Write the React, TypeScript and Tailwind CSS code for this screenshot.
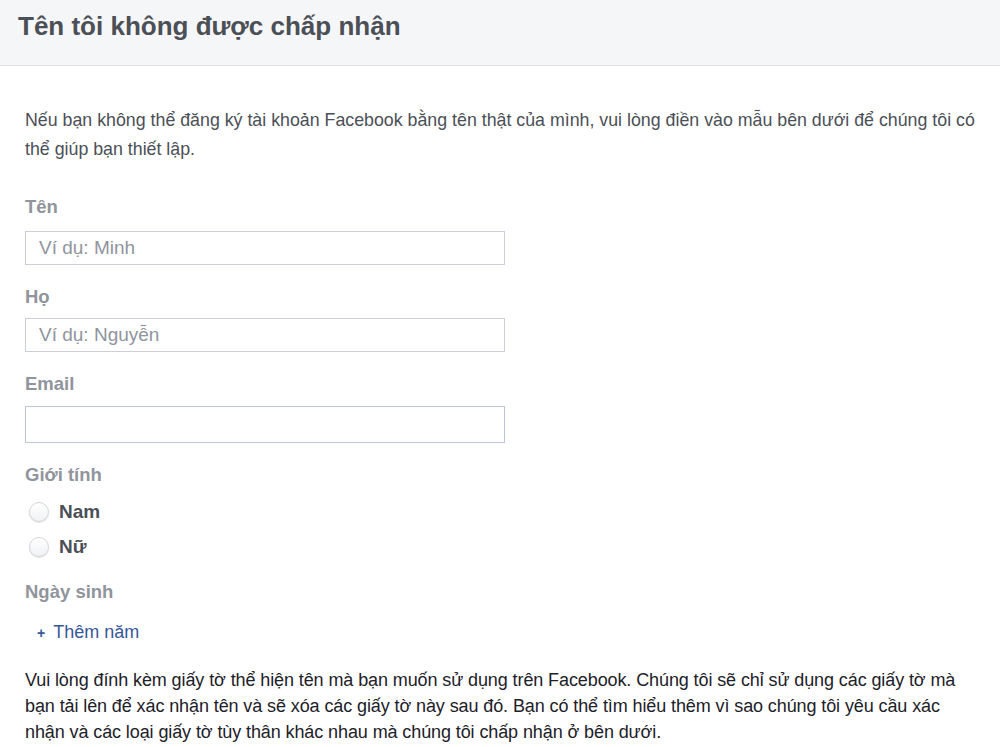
import React from "react";

function Label({ children }: { children: React.ReactNode }) {
  return <div className="text-[18.5px] font-bold text-[#90949c] leading-[22px]">{children}</div>;
}

function Radio({ label }: { label: string }) {
  return (
    <label className="flex items-center gap-[10px] h-[24px]">
      <span className="w-[20px] h-[20px] rounded-full border border-[#d3d6db] bg-gradient-to-b from-white to-[#f1f2f4] shadow-[0_1px_1px_rgba(0,0,0,0.12)]" />
      <span className="text-[19px] font-bold text-[#4b4f56]">{label}</span>
    </label>
  );
}

export default function App() {
  return (
    <div className="w-[1000px] h-[747px] overflow-hidden bg-white" style={{ fontFamily: '"Liberation Sans", Arial, sans-serif' }}>
      <div className="h-[66px] bg-[#f5f6f7] border-b border-[#dddfe2] flex items-center px-[18px]">
        <h1 className="text-[26px] font-bold text-[#4b4f56] -mt-[12px]">Tên tôi không được chấp nhận</h1>
      </div>
      <div className="px-[25px] pt-[40px]">
        <p className="w-[965px] text-[17.8px] leading-[29px] text-[#4b4f56]">
          Nếu bạn không thể đăng ký tài khoản Facebook bằng tên thật của mình, vui lòng điền vào mẫu bên dưới để chúng tôi có thể giúp bạn thiết lập.
        </p>
        <div className="mt-[32px]">
          <Label>Tên</Label>
          <input
            className="mt-[13px] block w-[480px] h-[34px] border border-[#ccd0d5] px-[13px] text-[19px] text-[#4b4f56] placeholder:text-[#90949c] outline-none"
            placeholder="Ví dụ: Minh"
          />
        </div>
        <div className="mt-[21px]">
          <Label>Họ</Label>
          <input
            className="mt-[10px] block w-[480px] h-[34px] border border-[#ccd0d5] px-[13px] text-[19px] text-[#4b4f56] placeholder:text-[#90949c] outline-none"
            placeholder="Ví dụ: Nguyễn"
          />
        </div>
        <div className="mt-[21px]">
          <Label>Email</Label>
          <input className="mt-[11px] block w-[480px] h-[37px] border border-[#bdc7d8] px-[13px] text-[19px] outline-none" />
        </div>
        <div className="mt-[21px]">
          <Label>Giới tính</Label>
          <div className="mt-[14px] pl-[4px] flex flex-col gap-[11px]">
            <Radio label="Nam" />
            <Radio label="Nữ" />
          </div>
        </div>
        <div className="mt-[22px]">
          <Label>Ngày sinh</Label>
          <div className="mt-[16px] pl-[12px] flex items-center gap-[8px] text-[18px] text-[#365899]">
            <span className="text-[14px] font-bold leading-none">+</span>
            <span>Thêm năm</span>
          </div>
        </div>
        <p className="mt-[21px] text-[18px] leading-[26px] text-[#1d2129] tracking-[-0.1px]">
          Vui lòng đính kèm giấy tờ thể hiện tên mà bạn muốn sử dụng trên Facebook. Chúng tôi sẽ chỉ sử dụng các giấy tờ mà bạn tải lên để xác nhận tên và sẽ xóa các giấy tờ này sau đó. Bạn có thể tìm hiểu thêm vì sao chúng tôi yêu cầu xác nhận và các loại giấy tờ tùy thân khác nhau mà chúng tôi chấp nhận ở bên dưới.
        </p>
      </div>
    </div>
  );
}
